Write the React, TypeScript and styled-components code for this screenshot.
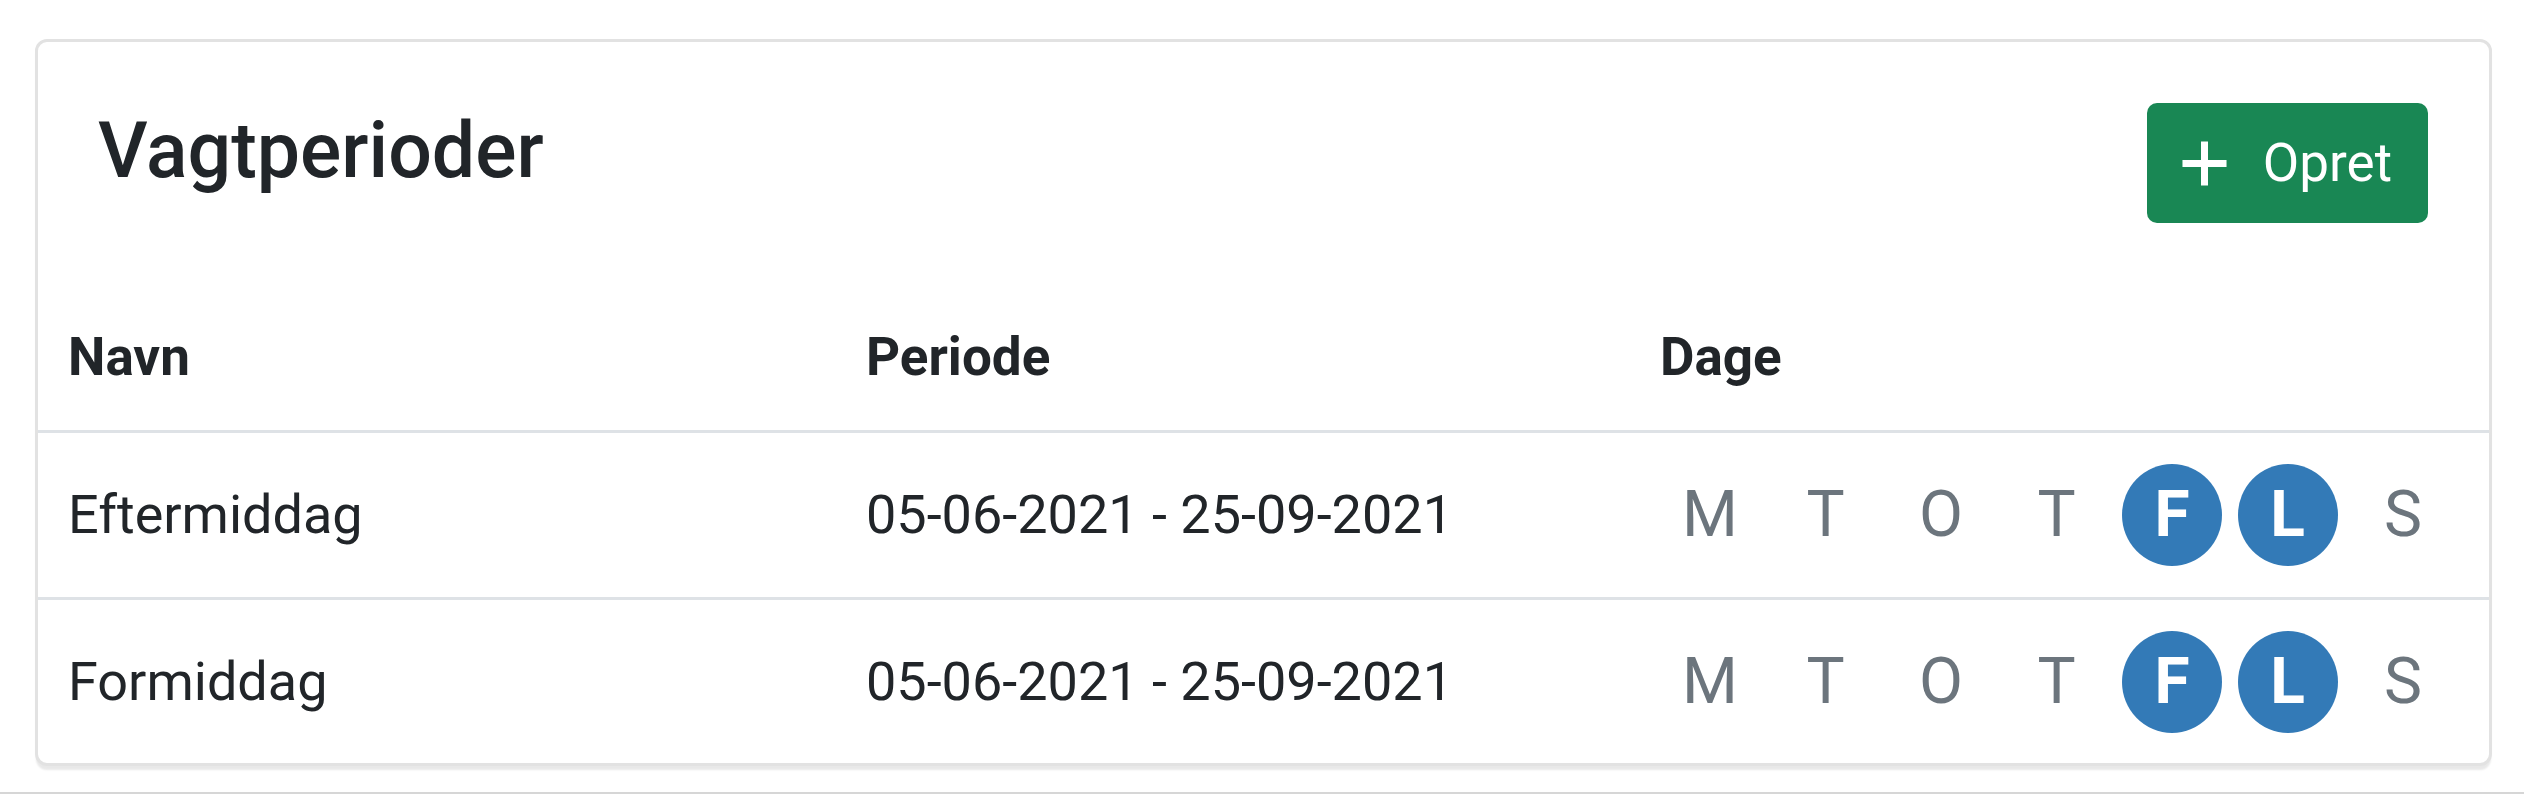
import React from "react"
import styled, { createGlobalStyle } from "styled-components"

const GlobalStyle = createGlobalStyle`
    html, body {
        margin: 0;
        padding: 0;
        background: #ffffff;
    }
    body {
        font-family: Roboto, "Liberation Sans", Arial, sans-serif;
        color: #212529;
    }
`

const Page = styled.div`
    box-sizing: border-box;
    height: 794px;
    padding: 39px 32px 0 35px;
    border-bottom: 2px solid #d6d6d6;
`

const Card = styled.section`
    box-sizing: border-box;
    height: 727px;
    border: 3px solid #e2e2e2;
    border-radius: 12px;
    background: #ffffff;
    box-shadow: 0 5px 2px -1px rgba(0, 0, 0, 0.09);
    overflow: hidden;
`

const CardHeader = styled.header`
    display: flex;
    align-items: flex-start;
    justify-content: space-between;
    padding: 61px 61px 61px 60px;
`

const Title = styled.h1`
    margin: 0;
    font-size: 77px;
    line-height: 96px;
    font-weight: 500;
    color: #212529;
`

const CreateButton = styled.button`
    display: flex;
    align-items: center;
    gap: 35px;
    height: 120px;
    padding: 0 36px 0 34px;
    border: none;
    border-radius: 10px;
    background: #198754;
    color: #ffffff;
    font-family: inherit;
    font-size: 53px;
    font-weight: 400;
    cursor: pointer;
`

const Row = styled.div<{ $head?: boolean }>`
    display: grid;
    grid-template-columns: 798px 794px 1fr;
    align-items: center;
    border-top: ${({ $head }) => ($head ? "none" : "3px solid #dee2e6")};
`

const Cell = styled.div<{ $head?: boolean }>`
    padding: ${({ $head }) => ($head ? "33px 30px" : "31px 30px")};
    font-size: ${({ $head }) => ($head ? "53px" : "54px")};
    line-height: 80px;
    font-weight: ${({ $head }) => ($head ? 700 : 400)};
    color: #212529;
    white-space: nowrap;
`

const Days = styled.div`
    display: flex;
    gap: 15.5px;
`

const Day = styled.span<{ $on?: boolean }>`
    display: flex;
    align-items: center;
    justify-content: center;
    width: 100px;
    height: 102px;
    border-radius: 50%;
    font-size: 64px;
    line-height: 1;
    font-weight: ${({ $on }) => ($on ? 700 : 400)};
    color: ${({ $on }) => ($on ? "#ffffff" : "#6c757d")};
    background: ${({ $on }) => ($on ? "#337ab7" : "transparent")};
`

const PlusIcon = () => (
    <svg width="47" height="47" viewBox="0 0 16 16" aria-hidden="true">
        <path d="M8 0.5v15M0.5 8h15" stroke="#ffffff" strokeWidth="2.4" fill="none" />
    </svg>
)

const dayLetters = ["M", "T", "O", "T", "F", "L", "S"]

const periods = [
    { name: "Eftermiddag", range: "05-06-2021 - 25-09-2021", days: [4, 5] },
    { name: "Formiddag", range: "05-06-2021 - 25-09-2021", days: [4, 5] },
]

export default function App() {
    return (
        <>
            <GlobalStyle />
            <Page>
                <Card>
                    <CardHeader>
                        <Title>Vagtperioder</Title>
                        <CreateButton>
                            <PlusIcon />
                            Opret
                        </CreateButton>
                    </CardHeader>
                    <Row $head>
                        <Cell $head>Navn</Cell>
                        <Cell $head>Periode</Cell>
                        <Cell $head>Dage</Cell>
                    </Row>
                    {periods.map((p) => (
                        <Row key={p.name}>
                            <Cell>{p.name}</Cell>
                            <Cell>{p.range}</Cell>
                            <Cell>
                                <Days>
                                    {dayLetters.map((d, i) => (
                                        <Day key={i} $on={p.days.includes(i)}>
                                            {d}
                                        </Day>
                                    ))}
                                </Days>
                            </Cell>
                        </Row>
                    ))}
                </Card>
            </Page>
        </>
    )
}
